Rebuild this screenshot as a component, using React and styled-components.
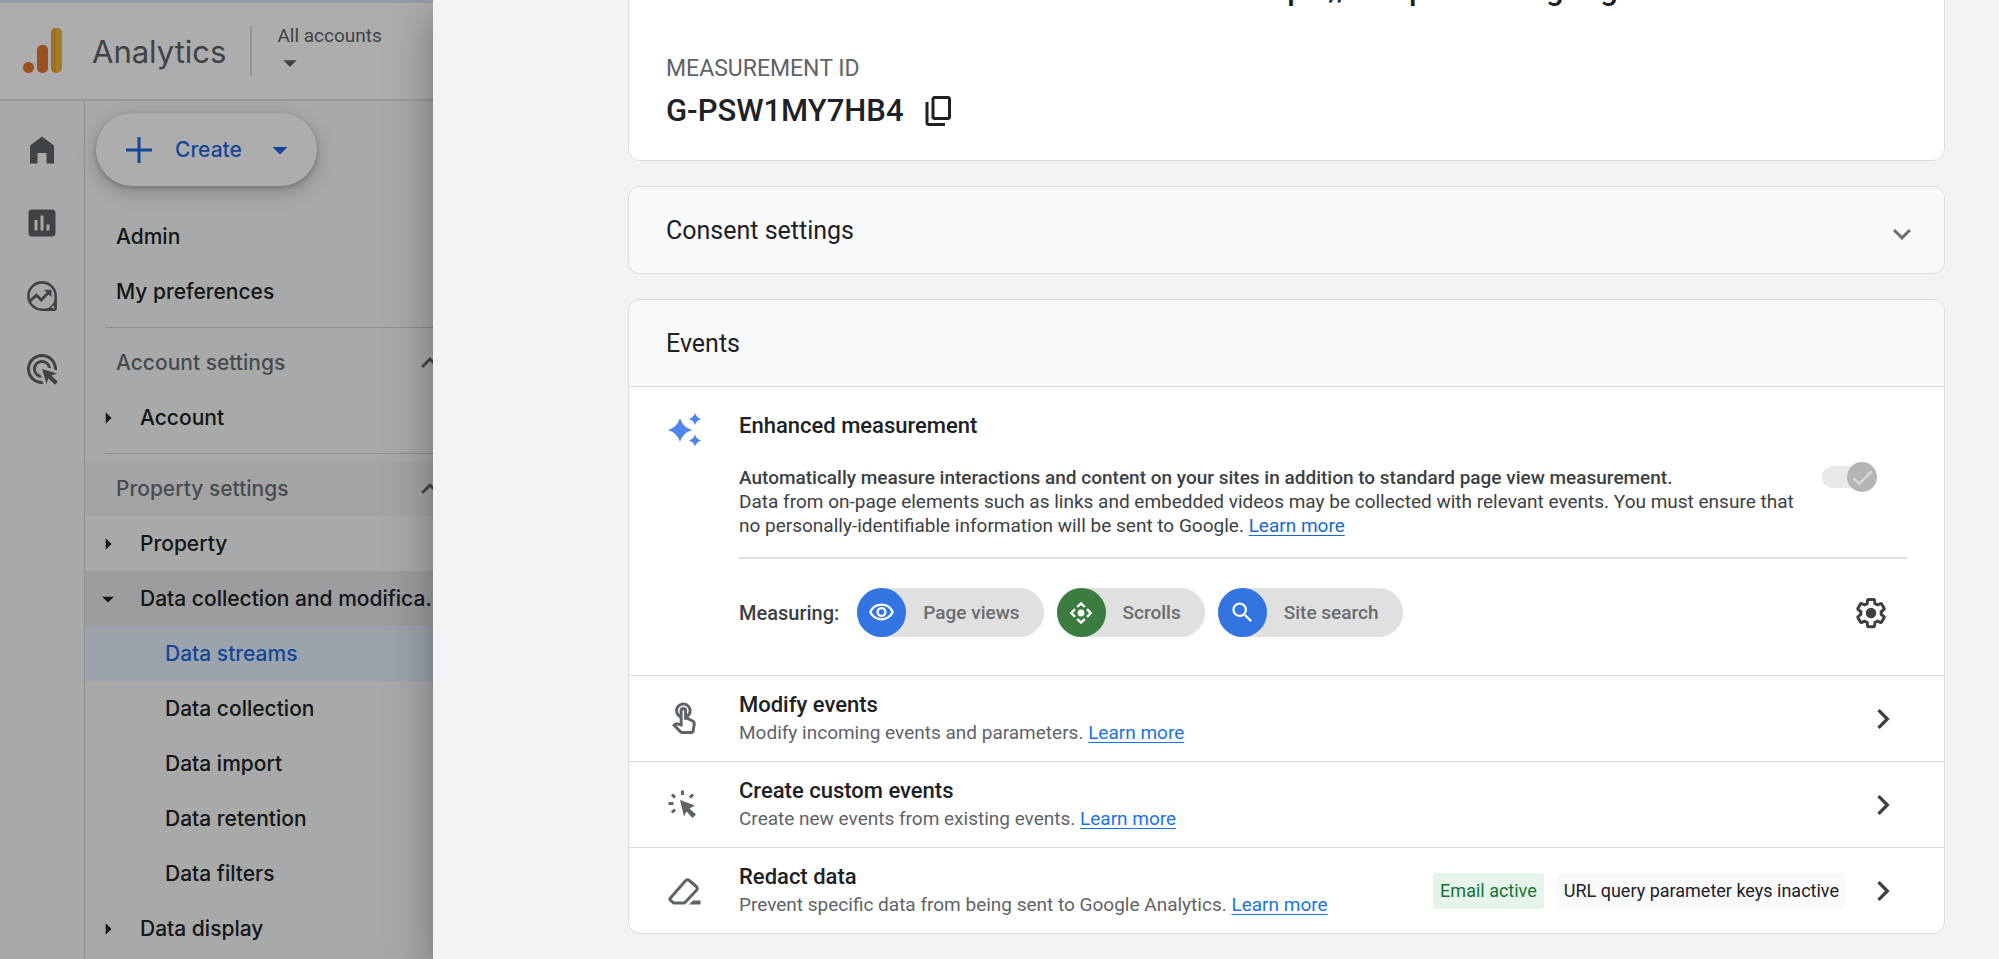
import React, { useState } from 'react';
import styled, { createGlobalStyle, css } from 'styled-components';
import {
  MdAdsClick,
  MdArrowDropDown,
  MdArrowRight,
  MdCheck,
  MdChevronRight,
  MdExpandLess,
  MdExpandMore,
  MdInsertChart,
  MdOutlineTouchApp,
  MdOutlineVisibility,
  MdSearch,
} from 'react-icons/md';

const GlobalStyle = createGlobalStyle`
  * {
    box-sizing: border-box;
  }

  body {
    margin: 0;
    overflow: hidden;
    font-family: Roboto, sans-serif;
    color: #202124;
  }

  button {
    padding: 0;
    border: 0;
    background: none;
    color: inherit;
    font: inherit;
    cursor: pointer;
  }

  h1, h2, h3, p {
    margin: 0;
    font-weight: 400;
  }

  svg {
    display: block;
    flex-shrink: 0;
  }
`;

/* ICONS */

const AnalyticsLogo = () => (
  <svg width='40' height='46' viewBox='0 0 40 46'>
    <rect x='28' y='0' width='11' height='45' rx='5' fill='#f3b43c' />
    <path d='M33 0a5 5 0 0 0-5 5v35a5 5 0 0 0 5 5z' fill='#e9a532' />
    <rect x='14' y='17' width='11' height='28' rx='5' fill='#e2772d' />
    <circle cx='5.5' cy='39.5' r='5.5' fill='#e2772d' />
  </svg>
);

const HomeIcon = () => (
  <svg width='36' height='36' viewBox='0 0 24 24' fill='currentColor'>
    <path d='M4 21V9l8-6 8 6v12h-5v-7H9v7z' />
  </svg>
);

const ExploreIcon = () => (
  <svg width='36' height='36' viewBox='0 0 24 24'>
    <path
      d='M12 2.9a9.1 9.1 0 1 0 0 18.2h8.1a1 1 0 0 0 1-1V12A9.1 9.1 0 0 0 12 2.9z'
      fill='none'
      stroke='currentColor'
      strokeWidth='1.7'
    />
    <path d='M20.5 14.5c-.8 2.8-3 5.2-6 6.2h6.5v-6z' fill='currentColor' />
    <path
      d='M4 15.2l4.3-3.7 3.2 3.2 5.4-5.5'
      fill='none'
      stroke='currentColor'
      strokeWidth='1.9'
    />
    <path d='M13.3 7.8h5v5z' fill='currentColor' />
    <circle cx='19.4' cy='19.5' r='0.8' fill='#f8f9fa' />
  </svg>
);

const PlusIcon = () => (
  <svg width='26' height='26' viewBox='0 0 26 26'>
    <path d='M13 0v26M0 13h26' stroke='currentColor' strokeWidth='3' />
  </svg>
);

const CopyIcon = () => (
  <svg width='36' height='36' viewBox='0 -960 960 960' fill='currentColor'>
    <path d='M360-240q-33 0-56.5-23.5T280-320v-480q0-33 23.5-56.5T360-880h360q33 0 56.5 23.5T800-800v480q0 33-23.5 56.5T720-240H360Zm0-80h360v-480H360v480ZM200-80q-33 0-56.5-23.5T120-160v-560h80v560h440v80H200Z' />
  </svg>
);

const SparkleIcon = () => (
  <svg width='36' height='36' viewBox='0 0 36 36' fill='#4e86ec'>
    <path d='M14 6Q16.700 15.300 26 18Q16.700 20.700 14 30Q11.300 20.700 2 18Q11.300 15.300 14 6z' />
    <path d='M29 1Q30.400 5.600 35 7Q30.400 8.400 29 13Q27.600 8.400 23 7Q27.600 5.600 29 1z' />
    <path d='M29 22.500Q30.400 27.100 35 28.500Q30.400 29.900 29 34.500Q27.600 29.900 23 28.500Q27.600 27.100 29 22.500z' />
  </svg>
);

const ScrollsIcon = () => (
  <svg width='24' height='24' viewBox='0 0 24 24'>
    <path
      d='M8.200 6L12 2.300 15.800 6M18 8.200L21.700 12 18 15.800M15.800 18L12 21.700 8.200 18M6 15.800L2.300 12 6 8.200'
      fill='none'
      stroke='currentColor'
      strokeWidth='2.400'
    />
    <circle cx='12' cy='12' r='3.400' fill='currentColor' />
  </svg>
);

const GearIcon = () => (
  <svg width='36' height='36' viewBox='0 0 24 24'>
    <path
      d='M19.43 12.98c.04-.32.07-.64.07-.98 0-.34-.03-.66-.07-.98l2.11-1.65c.19-.15.24-.42.12-.64l-2-3.46c-.09-.16-.26-.25-.44-.25-.06 0-.12.01-.17.03l-2.49 1c-.52-.4-1.08-.73-1.69-.98l-.38-2.65C14.46 2.18 14.25 2 14 2h-4c-.25 0-.46.18-.49.42l-.38 2.65c-.61.25-1.17.59-1.69.98l-2.49-1c-.06-.02-.12-.03-.18-.03-.17 0-.34.09-.43.25l-2 3.46c-.13.22-.07.49.12.64l2.11 1.65c-.04.32-.07.65-.07.98 0 .33.03.66.07.98l-2.11 1.65c-.19.15-.24.42-.12.64l2 3.46c.09.16.26.25.44.25.06 0 .12-.01.17-.03l2.49-1c.52.4 1.08.73 1.69.98l.38 2.65c.03.24.24.42.49.42h4c.25 0 .46-.18.49-.42l.38-2.65c.61-.25 1.17-.59 1.69-.98l2.49 1c.06.02.12.03.18.03.17 0 .34-.09.43-.25l2-3.46c.12-.22.07-.49-.12-.64l-2.11-1.65z'
      transform='translate(1.100 1.100) scale(.91)'
      fill='none'
      stroke='currentColor'
      strokeWidth='2.200'
    />
    <circle cx='12' cy='12' r='3.500' fill='currentColor' />
  </svg>
);

const ClickIcon = () => (
  <svg width='36' height='36' viewBox='0 0 36 36' fill='currentColor'>
    <path d='M14 13l15 5.500-5.500 3 6.500 6-3.500 3.500-6-6.500-2.500 5z' />
    <path
      d='M16.500 3.500v4.500M24 10.500l3-3M9 10.500l-3-3M2.500 16.500h5M9 22.500l-3 3'
      stroke='currentColor'
      strokeWidth='3'
    />
  </svg>
);

const EraserIcon = () => (
  <svg width='36' height='36' viewBox='0 0 36 36'>
    <path
      d='M4 25.500L19.500 7.800q1.800-2 3.800-.3l7 6q2 1.800.2 3.800L18.500 30H7.500L4 26.600q-.6-.6 0-1.100z'
      fill='none'
      stroke='currentColor'
      strokeWidth='3'
      strokeLinejoin='round'
    />
    <path d='M27 27.500h7.500v4H23z' fill='currentColor' />
  </svg>
);

const railItems = [
  { label: 'Home', icon: <HomeIcon /> },
  { label: 'Reports', icon: <MdInsertChart size={36} /> },
  { label: 'Explore', icon: <ExploreIcon /> },
  { label: 'Advertising', icon: <MdAdsClick size={36} /> },
];

const navSections = [
  {
    items: [
      { text: 'Admin', level: 0 },
      { text: 'My preferences', level: 0 },
    ],
  },
  {
    title: 'Account settings',
    items: [{ text: 'Account', level: 1 }],
  },
  {
    title: 'Property settings',
    active: true,
    items: [
      { text: 'Property', level: 1 },
      { text: 'Data collection and modification', level: 1, open: true },
      { text: 'Data streams', level: 2, selected: true },
      { text: 'Data collection', level: 2 },
      { text: 'Data import', level: 2 },
      { text: 'Data retention', level: 2 },
      { text: 'Data filters', level: 2 },
      { text: 'Data display', level: 1 },
    ],
  },
];

const chips = [
  { text: 'Page views', color: '#3275e0', icon: <MdOutlineVisibility size={27} /> },
  { text: 'Scrolls', color: '#3b7d40', icon: <ScrollsIcon /> },
  { text: 'Site search', color: '#3275e0', icon: <MdSearch size={27} /> },
];

const eventRows = [
  {
    title: 'Modify events',
    text: 'Modify incoming events and parameters.',
    icon: <MdOutlineTouchApp size={36} />,
  },
  {
    title: 'Create custom events',
    text: 'Create new events from existing events.',
    icon: <ClickIcon />,
  },
  {
    title: 'Redact data',
    text: 'Prevent specific data from being sent to Google Analytics.',
    icon: <EraserIcon />,
    tags: [
      { text: 'Email active', active: true },
      { text: 'URL query parameter keys inactive' },
    ],
  },
];

const App = () => {
  const [enhanced, setEnhanced] = useState(true);

  return (
    <Page>
      <GlobalStyle />
      <Header>
        <AnalyticsLogo />
        <Brand>Analytics</Brand>
        <AccountPicker>
          All accounts
          <MdArrowDropDown size={32} />
        </AccountPicker>
      </Header>
      <Body>
        <Rail>
          {railItems.map(({ label, icon }) => (
            <RailButton key={label} aria-label={label}>
              {icon}
            </RailButton>
          ))}
        </Rail>
        <Nav>
          <CreateButton>
            <PlusIcon />
            <span>Create</span>
            <MdArrowDropDown size={36} />
          </CreateButton>
          {navSections.map(({ title, active, items }, index) => (
            <NavSection key={index}>
              {title && (
                <NavTitle $active={active}>
                  <span>{title}</span>
                  <MdExpandLess size={36} />
                </NavTitle>
              )}
              {items.map(({ text, level, open, selected }) => (
                <NavItem
                  key={text}
                  href='#'
                  $level={level}
                  $open={open}
                  $selected={selected}
                >
                  {level === 1 &&
                    (open ? <MdArrowDropDown size={28} /> : <MdArrowRight size={28} />)}
                  <span>{text}</span>
                </NavItem>
              ))}
            </NavSection>
          ))}
        </Nav>
      </Body>
      <Scrim />

      {/* STREAM DETAILS DRAWER */}
      <Drawer>
        <DrawerContent>
          <Card>
            <StreamDetails>
              <StreamUrl>https://sampletracking.org</StreamUrl>
              <StreamField>
                <FieldLabel>MEASUREMENT ID</FieldLabel>
                <FieldValue>
                  G-PSW1MY7HB4
                  <button aria-label='Copy measurement ID'>
                    <CopyIcon />
                  </button>
                </FieldValue>
              </StreamField>
            </StreamDetails>
          </Card>

          <Card>
            <CardHeader>
              <h2>Consent settings</h2>
              <ExpandButton aria-label='Expand consent settings'>
                <MdExpandMore size={36} />
              </ExpandButton>
            </CardHeader>
          </Card>

          <Card>
            <CardHeader>
              <h2>Events</h2>
            </CardHeader>
            <Enhanced>
              <SparkleIcon />
              <div>
                <RowTitle>Enhanced measurement</RowTitle>
                <EnhancedInfo>
                  <EnhancedText>
                    <strong>
                      Automatically measure interactions and content on your sites in
                      addition to standard page view measurement.
                    </strong>
                    <p>
                      Data from on-page elements such as links and embedded videos may
                      be collected with relevant events. You must ensure that no
                      personally-identifiable information will be sent to Google.{' '}
                      <Link href='#'>Learn more</Link>
                    </p>
                  </EnhancedText>
                  <Toggle>
                    <input
                      type='checkbox'
                      aria-label='Enhanced measurement'
                      checked={enhanced}
                      onChange={(e) => setEnhanced(e.target.checked)}
                    />
                    <i>
                      <MdCheck size={27} />
                    </i>
                  </Toggle>
                </EnhancedInfo>
                <Measuring>
                  <MeasuringLabel>Measuring:</MeasuringLabel>
                  {chips.map(({ text, color, icon }) => (
                    <Chip key={text} $color={color}>
                      <i>{icon}</i>
                      {text}
                    </Chip>
                  ))}
                  <GearButton aria-label='Enhanced measurement settings'>
                    <GearIcon />
                  </GearButton>
                </Measuring>
              </div>
            </Enhanced>
            {eventRows.map(({ title, text, icon, tags = [] }) => (
              <EventRow key={title}>
                {icon}
                <EventText>
                  <RowTitle>{title}</RowTitle>
                  <p>
                    {text}{' '}
                    <Link href='#' $bright>
                      Learn more
                    </Link>
                  </p>
                </EventText>
                {tags.map((tag) => (
                  <Tag key={tag.text} $active={tag.active}>
                    {tag.text}
                  </Tag>
                ))}
                <OpenButton aria-label={`Open ${title}`}>
                  <MdChevronRight size={40} />
                </OpenButton>
              </EventRow>
            ))}
          </Card>
        </DrawerContent>
      </Drawer>
    </Page>
  );
};

const Page = styled.div`
  position: relative;
  display: flex;
  flex-direction: column;
  height: 100vh;
  overflow: hidden;
  background-color: #f8f9fa;
`;

const Header = styled.header`
  display: flex;
  align-items: center;
  height: 101px;
  padding-left: 23px;
  flex-shrink: 0;
  background-color: #fff;
  border-top: 3px solid #dde8fb;
  border-bottom: 2px solid #e2e2e2;
`;

const Brand = styled.h1`
  padding: 5px 24px 3px 29px;
  border-right: 2px solid #dadce0;
  font-family: Inter, sans-serif;
  font-size: 31px;
  line-height: 42px;
  color: #5f6368;
`;

const AccountPicker = styled.button`
  display: flex;
  flex-direction: column;
  align-items: flex-start;
  margin-left: 25px;
  padding-top: 2px;
  font-size: 19px;
  line-height: 22px;
  color: #5f6368;

  svg {
    margin-left: -3px;
  }
`;

const Body = styled.div`
  display: flex;
  flex: 1;
  min-height: 0;
`;

const Rail = styled.nav`
  display: flex;
  flex-direction: column;
  width: 85px;
  padding-top: 12px;
  border-right: 1px solid #d4d4d0;
  color: #5f6368;
`;

const RailButton = styled.button`
  display: flex;
  align-items: center;
  justify-content: center;
  height: 73px;
`;

const Nav = styled.nav`
  width: 368px;
  padding-top: 12px;
  font-family: Inter, sans-serif;
  font-size: 21px;
  font-weight: 500;
`;

const CreateButton = styled.button`
  display: flex;
  align-items: center;
  height: 73px;
  margin: 0 0 23px 11px;
  padding: 0 19px 0 30px;
  border-radius: 37px;
  background-color: #fff;
  box-shadow: 0 2px 4px rgba(60, 64, 67, 0.3), 0 6px 16px 4px rgba(60, 64, 67, 0.18);
  color: #1a6be0;

  span {
    margin: 0 20px 0 23px;
  }
`;

const NavSection = styled.section`
  & + &::before {
    content: '';
    display: block;
    height: 1px;
    margin: 8px 0 7px 20px;
    background-color: #d0d1d3;
  }
`;

const NavTitle = styled.h2`
  display: flex;
  align-items: center;
  justify-content: space-between;
  height: 55px;
  padding: 0 5px 0 31px;
  font-size: 21px;
  font-weight: 500;
  color: #6b6f74;
  background-color: ${({ $active }) => ($active ? '#f1f3f4' : 'transparent')};
`;

const NavItem = styled.a`
  display: flex;
  align-items: center;
  height: 55px;
  padding-right: 6px;
  padding-left: ${({ $level }) => [31, 9, 80][$level]}px;
  text-decoration: none;
  color: ${({ $selected }) => ($selected ? '#1a6be0' : '#202124')};

  ${({ $open }) =>
    $open &&
    css`
      background-color: #e6e7e9;
    `}

  ${({ $selected }) =>
    $selected &&
    css`
      background-color: #e8f0fe;
    `}

  svg {
    margin-right: 18px;
  }

  span {
    overflow: hidden;
    text-overflow: ellipsis;
    white-space: nowrap;
  }
`;

const Scrim = styled.div`
  position: absolute;
  inset: 0;
  background-color: rgba(0, 0, 0, 0.32);
`;

const Drawer = styled.main`
  position: absolute;
  inset: 0 0 0 433px;
  overflow: hidden;
  background-color: #f1f3f4;
  box-shadow: 0 12px 16px -8px rgba(0, 0, 0, 0.2), 0 24px 36px 3px rgba(0, 0, 0, 0.14),
    0 9px 46px 8px rgba(0, 0, 0, 0.12);
`;

/* scrolled so that the measurement ID is in view */
const DrawerContent = styled.div`
  display: flex;
  flex-direction: column;
  gap: 25px;
  margin-top: -49px;
  padding: 0 54px 25px 195px;
`;

const Card = styled.section`
  border: 1px solid #dadce0;
  border-radius: 12px;
  background-color: #fff;
  overflow: hidden;
`;

const StreamDetails = styled.div`
  display: grid;
  grid-template-columns: 47% 1fr;
  row-gap: 45px;
  padding: 18px 37px 29px;
`;

const StreamUrl = styled.p`
  grid-column: 2;
  font-size: 31px;
  font-weight: 500;
  line-height: 40px;
`;

const StreamField = styled.div`
  grid-column: 1;
`;

const FieldLabel = styled.p`
  margin-bottom: 8px;
  font-size: 23px;
  line-height: 28px;
  color: #5f6368;
`;

const FieldValue = styled.p`
  display: flex;
  align-items: center;
  gap: 17px;
  font-size: 31px;
  font-weight: 500;
  line-height: 40px;
`;

const CardHeader = styled.header`
  display: flex;
  align-items: center;
  justify-content: space-between;
  height: 86px;
  padding: 0 24px 0 37px;
  background-color: #f8f9fb;

  h2 {
    font-size: 25px;
  }
`;

const ExpandButton = styled.button`
  padding-top: 8px;
  color: #6b6f74;
`;

const Enhanced = styled.div`
  display: grid;
  grid-template-columns: 36px 1fr;
  column-gap: 37px;
  padding: 25px 37px 38px;
  border-top: 1px solid #dadce0;
`;

const RowTitle = styled.h3`
  font-size: 22px;
  font-weight: 500;
  line-height: 28px;
`;

const EnhancedInfo = styled.div`
  display: flex;
  align-items: flex-start;
  justify-content: space-between;
  margin-top: 26px;
  padding: 0 30px 19px 0;
  border-bottom: 2px solid #e0e0e0;
`;

const EnhancedText = styled.div`
  max-width: 1074px;
  font-size: 19px;
  line-height: 24px;
  color: #3c4043;

  strong {
    display: block;
    font-weight: 500;
  }
`;

const Link = styled.a`
  color: ${({ $bright }) => ($bright ? '#1a73e8' : '#1967d2')};
  text-underline-offset: 3px;
`;

const Toggle = styled.label`
  display: flex;
  align-items: center;
  justify-content: flex-end;
  width: 55px;
  height: 22px;
  border-radius: 11px;
  background-color: #e8e8e8;

  input {
    position: absolute;
    opacity: 0;
  }

  i {
    display: flex;
    align-items: center;
    justify-content: center;
    width: 30px;
    height: 30px;
    border-radius: 50%;
    background-color: #b5b5b5;
    color: #d9d9d9;
  }
`;

const Measuring = styled.div`
  display: flex;
  align-items: center;
  gap: 13px;
  margin-top: 29px;
`;

const MeasuringLabel = styled.span`
  margin-right: 5px;
  font-size: 20px;
  font-weight: 500;
  color: #3c4043;
`;

const Chip = styled.span`
  display: flex;
  align-items: center;
  gap: 17px;
  height: 49px;
  padding-right: 24px;
  border-radius: 25px;
  background-color: #e0e0e0;
  font-size: 19px;
  font-weight: 500;
  color: #6b6c6f;

  i {
    display: flex;
    align-items: center;
    justify-content: center;
    width: 49px;
    height: 49px;
    border-radius: 50%;
    background-color: ${({ $color }) => $color};
    color: #fff;
  }
`;

const GearButton = styled.button`
  margin: 0 18px 0 auto;
  color: #3c4043;
`;

const EventRow = styled.div`
  display: flex;
  align-items: center;
  height: 86px;
  padding: 0 41px 0 37px;
  border-top: 1px solid #dadce0;
  color: #5f6368;
`;

const EventText = styled.div`
  flex: 1;
  margin-left: 37px;
  font-size: 19px;
  line-height: 28px;

  h3 {
    color: #202124;
  }
`;

const Tag = styled.span`
  margin-left: 13px;
  padding: 0 7px;
  border-radius: 3px;
  font-size: 18px;
  line-height: 36px;
  color: ${({ $active }) => ($active ? '#137333' : '#202124')};
  background-color: ${({ $active }) => ($active ? '#e6f4ea' : '#f8f9fa')};
`;

const OpenButton = styled.button`
  margin-left: 17px;
  color: #3c4043;
`;

export default App;
